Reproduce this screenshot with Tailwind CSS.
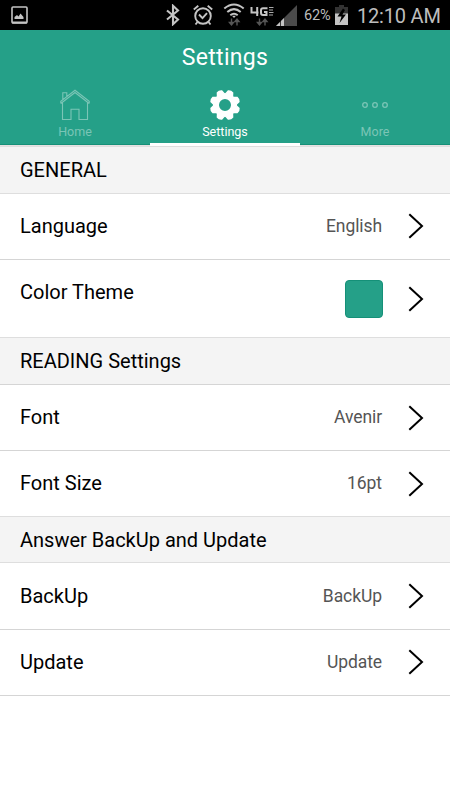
<!DOCTYPE html>
<html lang="en">
<head>
<meta charset="utf-8">
<title>Settings</title>
<script src="https://cdn.jsdelivr.net/npm/@tailwindcss/browser@4"></script>
</head>
<body class="bg-white font-['Roboto',sans-serif] text-black w-[450px] h-[800px] overflow-hidden">
<svg class="hidden"><symbol id="chev" viewBox="0 0 16 26"><path d="M1.3 1.3 14 13 1.3 24.7" fill="none" stroke="#000" stroke-width="2"/></symbol></svg>
<div class="h-[30px] bg-black flex items-center text-[#bdbdbd]">
  <svg class="w-[18px] h-[20px] ml-[10px]" viewBox="0 0 18 20"><rect x="2" y="2" width="15" height="16" rx="1" fill="none" stroke="#c4c4c4" stroke-width="1.6"/><path d="M2 17.500h15" stroke="#c4c4c4" stroke-width="2"/><path d="M4.500 14V12L7 10l1.500 1.500L10.500 8.500l3 3.500v2z" fill="#c4c4c4"/></svg>
  <svg class="w-[14px] h-[22px] ml-auto" viewBox="0 0 14 22"><path d="M1 6.500 12 15.500 7 20.200V1.800L12 6.500 1 15.500" fill="none" stroke="#c4c4c4" stroke-width="2.100"/></svg>
  <svg class="w-[20px] h-[22px] ml-[13px]" viewBox="0 0 20 22"><g fill="none" stroke="#c4c4c4" stroke-width="1.900"><circle cx="10" cy="12" r="7.800"/><path d="M.8 5.500 5.300 1.800M19.200 5.500 14.700 1.800M6 10.500l3.500 3.700 4.500-5M4.500 18 2.500 20.500M15.500 18l2 2.500"/></g></svg>
  <svg class="w-[22px] h-[24px] ml-[10px]" viewBox="0 0 22 24"><g fill="none" stroke="#c4c4c4" stroke-width="2"><path d="M1.300 5.500Q11 -2.500 20.700 5.500M4.300 9Q11 3.200 17.700 9M7.300 12.300Q11 9.200 14.700 12.300"/></g><path d="M9 12.800h4L11 15z" fill="#c4c4c4"/><path d="M8.500 15.500v5M6.500 19.500 8.500 22 10.500 19.500zM14 22.500v-5M12 18.500 14 16 16 18.500z" fill="#555" stroke="#555" stroke-width="1.400"/></svg>
  <svg class="w-[24px] h-[24px] ml-[5px]" viewBox="0 0 24 24"><g fill="none" stroke="#c4c4c4" stroke-width="2"><path d="M1.500 4v5.500h7M7.200 4v9M17.500 5.200H13q-2 0-2 2v2.500q0 2.300 2 2.300h3.500V9H14"/></g><path d="M19 4.500h4.500M19 7h4M19 9.500h4.500M19 12h4" stroke="#aaa" stroke-width="1.200" fill="none"/><path d="M9.500 15.500v5M7.500 19.500 9.500 22 11.500 19.500zM15 22.500v-5M13 18.500 15 16 17 18.500z" fill="#555" stroke="#555" stroke-width="1.400"/></svg>
  <svg class="w-[21px] h-[22px] ml-[2px]" viewBox="0 0 21 22"><path d="M0 22 21 1v21z" fill="#4b4b4b"/><path d="M0 22 8 14v8z" fill="#c4c4c4"/><path d="M4.500 17v5" stroke="#000" stroke-width=".7"/></svg>
  <span class="text-[14.500px] ml-[7px] w-[28px] leading-[20px] pt-[2px] whitespace-nowrap tracking-[-0.200px]">62%</span>
  <svg class="w-[13px] h-[20px] ml-[3px]" viewBox="0 0 13 20"><path d="M4 0h5v2h4v8H0V2h4z" fill="#333"/><path d="M0 8.500h13V20H0z" fill="#c4c4c4"/><path d="M8 3.500 2.500 11.500h4L4.500 18l6.500-8.500H7.500L10 5z" fill="#000"/></svg>
  <span class="text-[20px] leading-[30px] ml-[9px] w-[93px] pt-[2px] whitespace-nowrap tracking-[-0.200px]">12:10 AM</span>
</div>
<header class="h-[116px] bg-[#25a088] text-white flex flex-col">
  <h1 class="text-[23px] leading-[30px] mt-[13px] text-center tracking-[0.300px]">Settings</h1>
  <nav class="grid grid-cols-3 flex-1 text-[12.500px] leading-[16px]">
    <div class="flex flex-col items-center pt-[15px] border-b border-[#e6e1e1] shadow-[inset_0_-1px_0_#159078] text-[#7bc5b6]">
      <svg class="w-[32px] h-[34px]" viewBox="0 0 32 34"><g fill="none" stroke="#7bc5b6" stroke-width="1.100"><path d="M1.800 15.500 16 4.500 30.200 15.500M1.800 15.500V13.300L16 2.300 30.200 13.300v2.200M3.500 14.500V31.500h8.500V21.300h8v10.200h8.500V14.500M3.800 11.500V4.700h4v3.600"/></g></svg>
      <span class="mt-[2px]">Home</span>
    </div>
    <div class="flex flex-col items-center pt-[15px] border-b-[3px] border-white">
      <svg class="w-[32px] h-[34px]" viewBox="0 0 32 34"><g transform="translate(16 17) rotate(22.5)"><circle r="9" fill="none" stroke="#fff" stroke-width="6"/><g fill="#fff"><path id="t" d="M-4.300-11-2.900-14.700Q0-16.300 2.900-14.700L4.300-11z"/><use href="#t" transform="rotate(45)"/><use href="#t" transform="rotate(90)"/><use href="#t" transform="rotate(135)"/><use href="#t" transform="rotate(180)"/><use href="#t" transform="rotate(225)"/><use href="#t" transform="rotate(270)"/><use href="#t" transform="rotate(315)"/></g></g></svg>
      <span class="mt-[2px]">Settings</span>
    </div>
    <div class="flex flex-col items-center pt-[15px] border-b border-[#e6e1e1] shadow-[inset_0_-1px_0_#159078] text-[#7bc5b6]">
      <svg class="w-[32px] h-[34px]" viewBox="0 0 32 34"><g fill="none" stroke="#7bc5b6" stroke-width="1.300"><circle cx="6" cy="17" r="2.300"/><circle cx="16" cy="17" r="2.300"/><circle cx="26" cy="17" r="2.300"/></g></svg>
      <span class="mt-[2px]">More</span>
    </div>
  </nav>
</header>
<main class="text-[20px] leading-[24px]">
  <h2 class="h-[48px] bg-[#f4f4f4] border-t border-b border-[#dedede] px-[20px] pt-[11px]">GENERAL</h2>
  <div class="h-[66px] border-b border-[#d5d5d5] pl-[20px] pr-[26px] flex items-center"><span class="flex-1 pb-[2px]">Language</span><span class="text-[17.500px] tracking-[-0.080px] text-[#555] pb-[2px]">English</span><svg class="w-[16px] h-[26px] ml-[26px] mb-[1px]"><use href="#chev"/></svg></div>
  <div class="h-[78px] border-b border-[#dedede] pl-[20px] pr-[26px] flex items-center"><span class="flex-1 pb-[14px]">Color Theme</span><span class="w-[38px] h-[38px] rounded-[4px] bg-[#25a088] border border-[#159078]"></span><svg class="w-[16px] h-[26px] ml-[25px]"><use href="#chev"/></svg></div>
  <h2 class="h-[47px] bg-[#f4f4f4] border-b border-[#d5d5d5] px-[20px] pt-[11px]">READING Settings</h2>
  <div class="h-[66px] border-b border-[#d5d5d5] pl-[20px] pr-[26px] flex items-center"><span class="flex-1 pb-[2px]">Font</span><span class="text-[17.500px] tracking-[-0.080px] text-[#555] pb-[2px]">Avenir</span><svg class="w-[16px] h-[26px] ml-[26px]"><use href="#chev"/></svg></div>
  <div class="h-[66px] border-b border-[#dedede] pl-[20px] pr-[26px] flex items-center"><span class="flex-1 pb-[2px]">Font Size</span><span class="text-[17.500px] tracking-[-0.080px] text-[#555] pb-[2px]">16pt</span><svg class="w-[16px] h-[26px] ml-[26px]"><use href="#chev"/></svg></div>
  <h2 class="h-[46px] bg-[#f4f4f4] border-b border-[#dedede] px-[20px] pt-[11px]">Answer BackUp and Update</h2>
  <div class="h-[67px] border-b border-[#d5d5d5] pl-[20px] pr-[26px] flex items-center"><span class="flex-1 pb-[1px]">BackUp</span><span class="text-[17.500px] tracking-[-0.080px] text-[#555] pb-[1px]">BackUp</span><svg class="w-[16px] h-[26px] ml-[26px]"><use href="#chev"/></svg></div>
  <div class="h-[66px] border-b border-[#d5d5d5] pl-[20px] pr-[26px] flex items-center"><span class="flex-1 pb-[2px]">Update</span><span class="text-[17.500px] tracking-[-0.080px] text-[#555] pb-[2px]">Update</span><svg class="w-[16px] h-[26px] ml-[26px] mb-[1px]"><use href="#chev"/></svg></div>
</main>
</body>
</html>
